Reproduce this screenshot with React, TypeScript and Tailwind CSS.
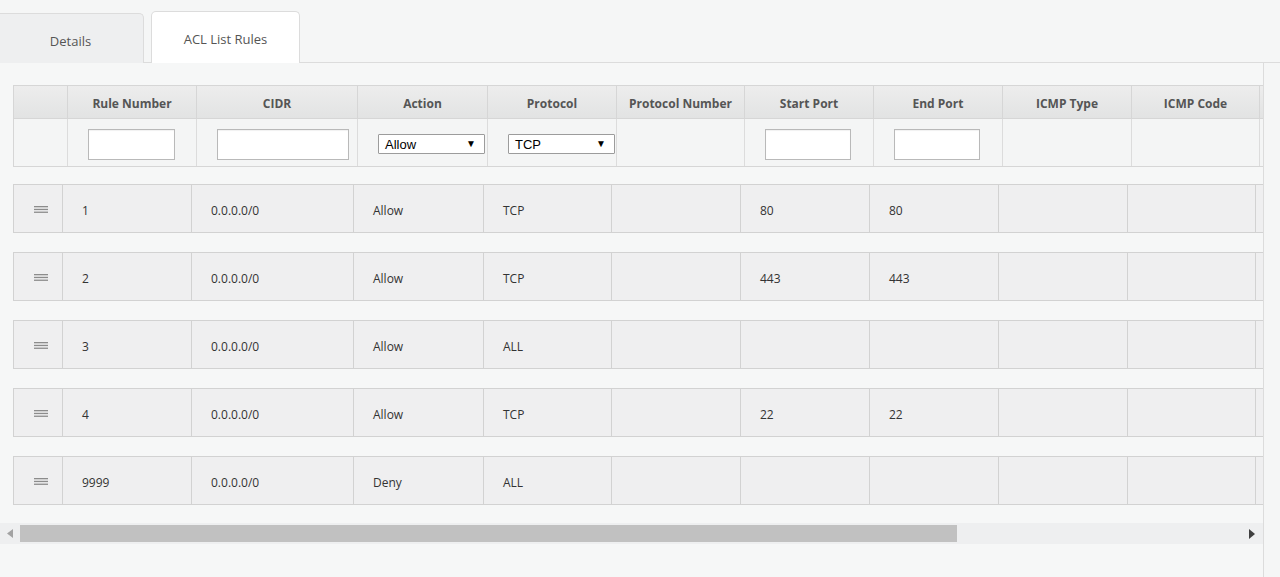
import React from 'react';

const HEAD_W = [54, 129, 161, 130, 129, 128, 129, 129, 129, 128, 140, 140, 140];
const ROW_W  = [49, 129, 162, 130, 128, 129, 129, 129, 129, 128, 140, 140, 140];

// trailing columns sit past the clip edge, so they carry no label
const HEADERS = [
  '', 'Rule Number', 'CIDR', 'Action', 'Protocol', 'Protocol Number',
  'Start Port', 'End Port', 'ICMP Type', 'ICMP Code', '', '', '',
];

interface Rule {
  num:   string;
  cidr:  string;
  action: string;
  proto: string;
  start: string;
  end:   string;
}

const RULES: Rule[] = [
  { num: '1',    cidr: '0.0.0.0/0', action: 'Allow', proto: 'TCP', start: '80',  end: '80'  },
  { num: '2',    cidr: '0.0.0.0/0', action: 'Allow', proto: 'TCP', start: '443', end: '443' },
  { num: '3',    cidr: '0.0.0.0/0', action: 'Allow', proto: 'ALL', start: '',    end: ''    },
  { num: '4',    cidr: '0.0.0.0/0', action: 'Allow', proto: 'TCP', start: '22',  end: '22'  },
  { num: '9999', cidr: '0.0.0.0/0', action: 'Deny',  proto: 'ALL', start: '',    end: ''    },
];

function FakeInput({ w }: { w: number }) {
  return (
    <div
      className="h-[31px] bg-white border border-[#b9b9b9] shadow-[inset_0_1px_1px_rgba(0,0,0,0.06)]"
      style={{ width: w }}
    />
  );
}

function FakeSelect({ value }: { value: string }) {
  return (
    <div className="mt-[5px] w-[107px] h-[20px] bg-white border border-[#9c9c9c] rounded-[1px] flex items-center justify-between pl-[6px] pr-[8px] font-['Liberation_Sans',Arial,sans-serif] text-[13px] text-black">
      <span className="mt-[1px]">{value}</span>
      <span className="text-[10px] leading-none">▼</span>
    </div>
  );
}

function Handle() {
  return (
    <svg width="14" height="7" viewBox="0 0 14 7">
      <rect x="0" y="0" width="14" height="1.3" fill="#8c8c8c" />
      <rect x="0" y="2.8" width="14" height="1.3" fill="#8c8c8c" />
      <rect x="0" y="5.6" width="14" height="1.3" fill="#8c8c8c" />
    </svg>
  );
}

function RuleRow({ r }: { r: Rule }) {
  const vals = [r.num, r.cidr, r.action, r.proto, '', r.start, r.end, '', '', '', '', ''];
  return (
    <div className="flex h-[49px] border border-[#d2d2d2] bg-[#efeff0] text-[12px] text-[#333]">
      <div className="flex items-center justify-center border-r border-[#d2d2d2] shrink-0" style={{ width: ROW_W[0] }}>
        <span className="ml-[6px] mt-[2px] flex"><Handle /></span>
      </div>
      {vals.map((v, i) => (
        <div
          key={i}
          className="flex items-center pl-[19px] pt-[4px] border-r border-[#d2d2d2] shrink-0"
          style={{ width: ROW_W[i + 1] }}
        >
          {v}
        </div>
      ))}
    </div>
  );
}

export default function App() {
  return (
    <div className="w-[1280px] h-[577px] overflow-hidden bg-[#f5f6f6] font-['Open_Sans',sans-serif]">
      {/* Tabs */}
      <div className="h-[63px] pt-[12px] flex items-end border-b border-[#dcdcdc]">
        <div className="w-[144px] h-[50px] -mb-px bg-[#eeeff0] border-t border-r border-[#dcdcdc] rounded-tr-[5px] flex items-center justify-center text-[13px] text-[#555]">
          <span className="ml-[-2px] mt-[6px]">Details</span>
        </div>
        <div className="ml-[7px] w-[149px] h-[52px] -mb-px bg-white border border-b-0 border-[#dcdcdc] rounded-t-[5px] flex items-center justify-center text-[13px] text-[#555]">
          <span className="mt-[4px]">ACL List Rules</span>
        </div>
      </div>

      {/* Panel */}
      <div className="w-[1264px] h-[514px] border-r border-[#dcdcdc] bg-[#f6f7f7] overflow-hidden">
        <div className="pl-[13px] pt-[22px] w-[1800px]">
          {/* Header + filters */}
          <div className="w-fit border border-[#d6d6d6]">
            <div className="flex h-[33px] border-b border-[#d6d6d6] bg-gradient-to-b from-[#ededed] to-[#e2e3e3]">
              {HEADERS.map((h, i) => (
                <div
                  key={i}
                  className="flex items-center justify-center pt-[3px] border-r border-[#d6d6d6] shrink-0 text-[12px] font-bold text-[#555]"
                  style={{ width: HEAD_W[i] }}
                >
                  {h}
                </div>
              ))}
            </div>
            <div className="flex h-[47px] bg-[#f4f5f5]">
              {HEADERS.map((_, i) => (
                <div
                  key={i}
                  className="flex items-start pl-[20px] pt-[10px] border-r border-[#dcdcdc] shrink-0"
                  style={{ width: HEAD_W[i] }}
                >
                  {i === 1 && <FakeInput w={87} />}
                  {i === 2 && <FakeInput w={132} />}
                  {i === 3 && <FakeSelect value="Allow" />}
                  {i === 4 && <FakeSelect value="TCP" />}
                  {i === 6 && <FakeInput w={86} />}
                  {i === 7 && <FakeInput w={86} />}
                </div>
              ))}
            </div>
          </div>

          {/* Rows */}
          <div className="mt-[17px] flex flex-col gap-[19px]">
            {RULES.map(r => (
              <RuleRow key={r.num} r={r} />
            ))}
          </div>
        </div>

        {/* Horizontal scrollbar */}
        <div className="mt-[18px] h-[21px] bg-[#eeeff0] flex items-center">
          <div className="w-[20px] flex justify-center">
            <svg width="6" height="9" viewBox="0 0 6 9"><path d="M6 0 L0 4.5 L6 9 Z" fill="#a3a3a3" /></svg>
          </div>
          <div className="w-[937px] h-[17px] bg-[#c1c1c1]" />
          <div className="flex-1" />
          <div className="w-[20px] flex justify-center mr-[1px]">
            <svg width="6" height="10" viewBox="0 0 6 10"><path d="M0 0 L6 5 L0 10 Z" fill="#3f3f3f" /></svg>
          </div>
        </div>
      </div>
    </div>
  );
}
